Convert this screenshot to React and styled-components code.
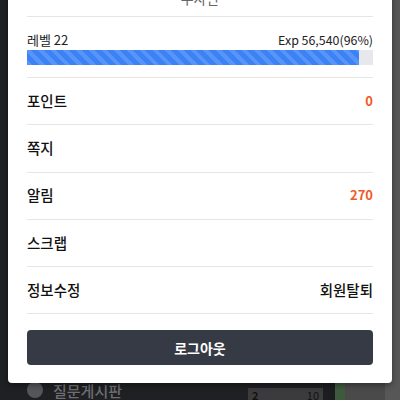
import React from "react";
import styled, { createGlobalStyle } from "styled-components";

const GlobalStyle = createGlobalStyle`
  html, body {
    margin: 0;
    padding: 0;
    background: #1f2023;
  }
  * {
    box-sizing: border-box;
  }
`;

const menu = [
  { label: "포인트", value: "0", accent: true },
  { label: "쪽지" },
  { label: "알림", value: "270", accent: true },
  { label: "스크랩" },
  { label: "정보수정", value: "회원탈퇴" },
];

function App() {
  const percent = 96;
  return (
    <>
      <GlobalStyle />
      <Page>
        <Backdrop>
          <Sidebar>
            <SideItem>
              <Dot />
              <span>질문게시판</span>
            </SideItem>
          </Sidebar>
          <Board>
            <Cell />
            <Cell>
              <b>2</b>
              <span>10</span>
            </Cell>
          </Board>
          <Gutter />
          <GreenStrip />
          <RightPane />
        </Backdrop>

        <Modal>
          <Header>부사관</Header>
          <LevelBox>
            <LevelText>
              <span>레벨 22</span>
              <Exp>Exp 56,540({percent}%)</Exp>
            </LevelText>
            <Track>
              <Fill style={{ width: `${percent}%` }} />
            </Track>
          </LevelBox>
          {menu.map((item) => (
            <Row key={item.label}>
              <Label>{item.label}</Label>
              {item.value && <Value $accent={item.accent}>{item.value}</Value>}
            </Row>
          ))}
          <LogoutButton>로그아웃</LogoutButton>
        </Modal>
      </Page>
    </>
  );
}

const Page = styled.div`
  position: relative;
  width: 400px;
  height: 400px;
  overflow: hidden;
  font-family: "Noto Sans CJK KR", "Noto Sans", sans-serif;
`;

const Backdrop = styled.div`
  display: flex;
  height: 100%;
`;

const Sidebar = styled.div`
  width: 248px;
  background: #1f2023;
  display: flex;
  flex-direction: column;
  justify-content: flex-end;
  padding: 0 0 0 27px;
`;

const SideItem = styled.div`
  display: flex;
  align-items: center;
  gap: 10px;
  height: 28px;
  margin-bottom: -4px;
  color: #6e6f73;
  font-size: 15px;
  font-weight: 500;
`;

const Dot = styled.div`
  width: 16px;
  height: 16px;
  border-radius: 50%;
  background: #55565a;
`;

const Board = styled.div`
  width: 75px;
  display: flex;
  flex-direction: column;
  justify-content: flex-end;
  gap: 6px;
  background: #1f2023;
`;

const Cell = styled.div`
  display: flex;
  justify-content: space-between;
  align-items: flex-start;
  height: 12px;
  padding: 0 4px;
  background: #3b3b3d;
  color: #111;
  font-size: 11px;
  line-height: 14px;
  overflow: hidden;
`;

const Gutter = styled.div`
  width: 12px;
  background: #1c1d20;
`;

const GreenStrip = styled.div`
  width: 10px;
  background: #3e5a3d;
`;

const RightPane = styled.div`
  flex: 1;
  background: linear-gradient(90deg, #4a4a4b 0, #4a4a4b 40px, #575758 40px);
`;

const Modal = styled.div`
  position: absolute;
  left: 8px;
  right: 8px;
  top: -20px;
  background: #fff;
  border-radius: 4px;
  padding: 0 19px 18px;
  box-shadow: 0 2px 6px rgba(0, 0, 0, 0.4);
`;

const Header = styled.div`
  height: 37px;
  border-bottom: 1px solid #e6e6e6;
  text-align: center;
  color: #666;
  font-size: 14px;
  line-height: 36px;
`;

const LevelBox = styled.div`
  padding: 14px 0 12px;
  border-bottom: 1px solid #e6e6e6;
`;

const LevelText = styled.div`
  display: flex;
  justify-content: space-between;
  align-items: baseline;
  color: #222;
  font-size: 13px;
  line-height: 18px;
  margin-bottom: 1px;
`;

const Exp = styled.span`
  font-size: 12.4px;
`;

const Track = styled.div`
  height: 15px;
  background: #e6e8eb;
`;

const Fill = styled.div`
  height: 100%;
  background-color: #3b82f6;
  background-image: repeating-linear-gradient(
    45deg,
    rgba(255, 255, 255, 0.15) 0 4px,
    transparent 4px 9px
  );
`;

const Row = styled.div`
  display: flex;
  align-items: center;
  justify-content: space-between;
  height: 47.3px;
  padding-bottom: 2px;
  border-bottom: 1px solid #e6e6e6;
`;

const Label = styled.span`
  color: #111;
  font-size: 14.5px;
  font-weight: 500;
`;

const Value = styled.span`
  color: ${(p) => (p.$accent ? "#f05a28" : "#111")};
  font-size: ${(p) => (p.$accent ? "13px" : "14.5px")};
  font-weight: ${(p) => (p.$accent ? 700 : 500)};
`;

const LogoutButton = styled.button`
  display: block;
  width: 100%;
  height: 35px;
  margin-top: 16px;
  border: none;
  border-radius: 4px;
  background: #353a45;
  color: #fff;
  font-family: inherit;
  font-size: 14px;
  font-weight: 700;
`;

export default App;
